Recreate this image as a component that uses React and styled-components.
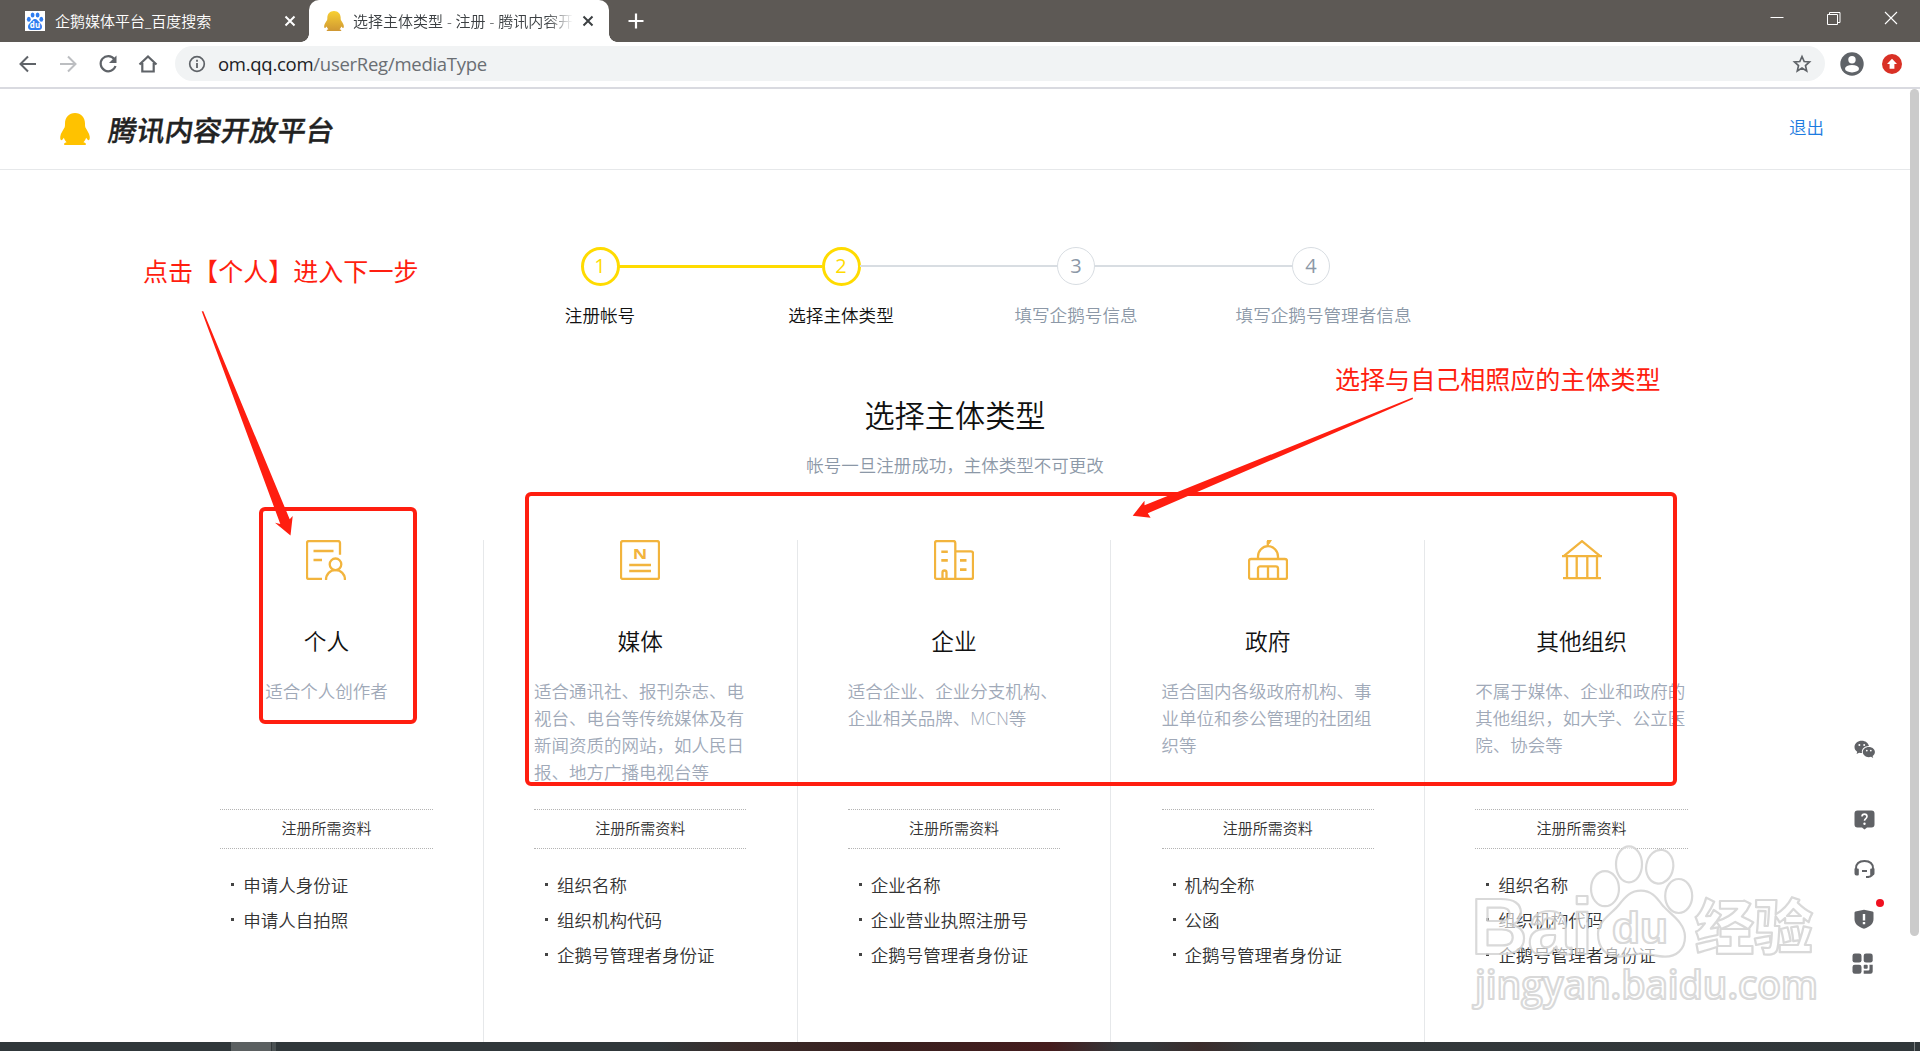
import React from 'react';
import styled, { createGlobalStyle, css } from 'styled-components';

const GOLD = '#f2b43d';
const YELLOW = '#ffdb00';
const RED = '#ff1e10';

const Global = createGlobalStyle`
  * { box-sizing: border-box; }
  body {
    margin: 0;
    background: #fff;
    font-family: "Open Sans", "Noto Sans CJK SC", sans-serif;
    font-weight: 350;
    overflow: hidden;
  }
  svg { display: block; flex: none; }
`;

const Screen = styled.div`
  position: relative;
  width: 1920px;
  height: 1051px;
  display: flex;
  flex-direction: column;
  overflow: hidden;
  background: #fff;
`;

/* ---------- browser chrome ---------- */
const TabStrip = styled.div`
  height: 42px;
  flex: none;
  display: flex;
  align-items: stretch;
  background: #5d5955;
`;

const Tab = styled.div`
  position: relative;
  display: flex;
  align-items: center;
  width: ${p => p.$width}px;
  padding: 0 0 0 ${p => p.$pad}px;
  font-size: 15px;
  color: ${p => (p.$active ? '#3c4043' : '#fff')};
  ${p => p.$active && css`
    background: #fff;
    border-radius: 10px 10px 0 0;
    &::before, &::after {
      content: "";
      position: absolute;
      bottom: 0;
      width: 8px;
      height: 8px;
    }
    &::before {
      left: -8px;
      background: radial-gradient(circle at 0 0, transparent 7.5px, #fff 8px);
    }
    &::after {
      right: -8px;
      background: radial-gradient(circle at 100% 0, transparent 7.5px, #fff 8px);
    }
  `}
`;

const TabTitle = styled.span`
  width: ${p => p.$width}px;
  margin-left: ${p => p.$gap}px;
  line-height: 20px;
  white-space: nowrap;
  overflow: hidden;
  ${p => p.$fade && css`
    mask-image: linear-gradient(90deg, #000 88%, transparent 100%);
  `}
`;

const TabClose = styled.div`
  margin-left: ${p => p.$gap || 0}px;
`;

const NewTab = styled.div`
  display: flex;
  align-items: center;
  padding-left: 19px;
`;

const WindowButtons = styled.div`
  display: flex;
  gap: 43px;
  margin-left: auto;
  padding: 11px 22px 0 0;
`;

const Toolbar = styled.div`
  height: 47px;
  flex: none;
  display: flex;
  align-items: center;
  padding: 0 17px 2px 16px;
  border-bottom: 2px solid #d9dae0;
`;

const NavButtons = styled.div`
  display: flex;
  gap: 16px;
  width: 159px;
`;

const Omnibox = styled.div`
  flex: none;
  width: 1650px;
  height: 35px;
  border-radius: 18px;
  background: #f1f3f4;
  display: flex;
  align-items: center;
  padding: 0 12px 0 13px;
`;

const Url = styled.span`
  flex: 1;
  margin-left: 12px;
  font-size: 18.5px;
  font-weight: 400;
  line-height: 26px;
  letter-spacing: -0.27px;
  color: #6a6e73;
  b { font-weight: 400; color: #202124; }
`;

const ToolbarIcons = styled.div`
  display: flex;
  align-items: center;
  gap: 17px;
  margin-left: 14px;
`;

/* ---------- page ---------- */
const Page = styled.div`
  flex: 1;
  min-height: 0;
  display: flex;
`;

const Content = styled.main`
  flex: 1;
  display: flex;
  flex-direction: column;
`;

const ScrollTrack = styled.div`
  width: 10px;
  flex: none;
`;

const ScrollThumb = styled.div`
  width: 9px;
  height: 847px;
  border-radius: 5px;
  background: #cbcbcb;
`;

const Header = styled.header`
  height: 81px;
  flex: none;
  display: flex;
  align-items: center;
  padding: 0 86px 1px 60px;
  border-bottom: 1px solid #e6e8ea;
`;

const BrandName = styled.span`
  margin: 2px 0 0 19px;
  font-size: 28.2px;
  line-height: 36px;
  font-weight: 500;
  -webkit-text-stroke: 0.35px #222;
  color: #222;
  transform: skewX(-9deg);
`;

const Logout = styled.a`
  margin: -4px 0 0 auto;
  font-size: 17.5px;
  line-height: 26px;
  color: #1c7be0;
`;

const Steps = styled.div`
  display: flex;
  justify-content: center;
  margin-top: 77px;
  padding-left: 1px;
`;

const Step = styled.div`
  width: 38px;
  display: flex;
  flex-direction: column;
  align-items: center;
  gap: 16px;
`;

const StepCircle = styled.div`
  width: ${p => (p.$on ? 39 : 38)}px;
  height: ${p => (p.$on ? 39 : 38)}px;
  flex: none;
  border-radius: 50%;
  border: ${p => (p.$on ? `3px solid ${YELLOW}` : '1px solid #d8dde2')};
  display: flex;
  align-items: center;
  justify-content: center;
  font-size: 20px;
  font-weight: 400;
  line-height: 30px;
  padding-bottom: 1px;
  color: ${p => (p.$on ? YELLOW : '#8c98a7')};
`;

const StepLabel = styled.span`
  font-size: 17.6px;
  line-height: 26px;
  white-space: nowrap;
  color: ${p => (p.$on ? '#111' : '#8c98a7')};
  margin-top: ${p => (p.$on ? 0 : 1)}px;
  margin-left: ${p => p.$shift || 0}px;
`;

const StepLine = styled.div`
  width: ${p => p.$width}px;
  height: ${p => (p.$on ? 3 : 2)}px;
  margin-top: 18px;
  background: ${p => (p.$on ? YELLOW : '#d8dde2')};
`;

const Title = styled.h1`
  margin: 66px 0 0;
  font-size: 30.2px;
  line-height: 44px;
  font-weight: 350;
  text-align: center;
  color: #111;
`;

const Subtitle = styled.p`
  margin: 14px 0 0;
  font-size: 17.5px;
  line-height: 26px;
  text-align: center;
  color: #8c98a7;
`;

const Columns = styled.div`
  flex: 1;
  display: flex;
  margin: 62px 171px 0 170px;
`;

const Column = styled.section`
  flex: 1;
  display: flex;
  flex-direction: column;
  align-items: center;
  border-right: 1px solid #e6e8ea;
  &:last-child { border-right-color: transparent; }
`;

const ColumnTitle = styled.h2`
  margin: 45px 0 0;
  font-size: 22.7px;
  line-height: 34px;
  font-weight: 350;
  color: #111;
`;

const Description = styled.div`
  width: 212.5px;
  height: 131px;
  margin-top: 19px;
  font-size: 17.5px;
  line-height: 27px;
  color: #a0a9b8;
  display: flex;
  justify-content: ${p => (p.$center ? 'center' : 'flex-start')};
`;

const Lines = styled.div`
  display: flex;
  flex-direction: column;
  white-space: nowrap;
`;

const Required = styled.div`
  width: 212.5px;
  height: 40px;
  border: 0 dotted #b4b4b4;
  border-width: 1px 0;
  font-size: 15px;
  line-height: 37px;
  text-align: center;
  color: #333;
`;

const Items = styled.ul`
  width: 212.5px;
  margin: 18px 0 0;
  padding: 0;
  list-style: none;
`;

const Item = styled.li`
  display: flex;
  align-items: center;
  height: 35.2px;
  padding-left: 11px;
  font-size: 17.5px;
  white-space: nowrap;
  color: #333;
  &::before {
    content: "";
    width: 3px;
    height: 3px;
    margin-right: 9px;
    background: #444;
  }
`;

/* ---------- floating tools ---------- */
const FloatingTools = styled.aside`
  position: absolute;
  left: 1852px;
  top: 740px;
  width: 26px;
  display: flex;
  flex-direction: column;
  align-items: flex-start;
`;

const Tool = styled.div`
  position: relative;
  height: ${p => p.$height}px;
  padding-left: ${p => (p.$flush ? 0 : 2)}px;
`;

const Badge = styled.span`
  position: absolute;
  left: 24px;
  top: -10px;
  width: 8px;
  height: 8px;
  border-radius: 50%;
  background: #f01020;
`;

/* ---------- overlays ---------- */
const Overlay = styled.svg`
  position: absolute;
  left: 0;
  top: 0;
  pointer-events: none;
`;

const Frame = styled.div`
  position: absolute;
  left: ${p => p.$x}px;
  top: ${p => p.$y}px;
  width: ${p => p.$w}px;
  height: ${p => p.$h}px;
  border: 4px solid ${RED};
  border-radius: 6px;
`;

const Note = styled.div`
  position: absolute;
  left: ${p => p.$x}px;
  top: ${p => p.$y}px;
  font-size: 25.05px;
  font-weight: 400;
  line-height: 36px;
  white-space: nowrap;
  color: ${RED};
`;

const Taskbar = styled.footer`
  height: 9px;
  flex: none;
  display: flex;
  background: linear-gradient(90deg, #30373a 0, #30373a 660px, #3a2b29 740px, #38201f 880px, #451c1d 1050px, #33373a 1120px, #33373a 1150px, #3b2c2b 1200px, #33383a 1260px, #30373a 100%);
`;

const TaskbarApp = styled.div`
  margin-left: 231px;
  width: 45px;
  background: linear-gradient(90deg, #5b6061 0 40px, #33393b 40px 41px, #4a5153 41px);
`;

const ShowDesktop = styled.div`
  margin-left: auto;
  width: 6px;
  border-left: 1px solid #7d8284;
`;

const Glyph = ({ w = 24, h = w, vb = `0 0 ${w} ${h}`, children, ...rest }) => (
  <svg width={w} height={h} viewBox={vb} fill="none" {...rest}>{children}</svg>
);

const BaiduIcon = () => (
  <Glyph w={20}>
    <rect width="20" height="20" fill="#fff" />
    <g fill="#2f7df0">
      <ellipse cx="3.8" cy="8.2" rx="1.9" ry="2.5" />
      <ellipse cx="7.6" cy="4" rx="1.9" ry="2.6" />
      <ellipse cx="12.6" cy="4" rx="1.9" ry="2.6" />
      <ellipse cx="16.3" cy="8.2" rx="1.9" ry="2.5" />
      <path d="M10 8c2 0 3 2 4.500 3.600C16 13 17 14 17 16c0 2-1.500 3-3 3H6c-1.500 0-3-1-3-3 0-2 1-3 2.500-4.400C7 10 8 8 10 8z" />
    </g>
    <text x="10" y="17.300" textAnchor="middle" fontSize="8" fontWeight="700" fontFamily="Open Sans, sans-serif" fill="#fff">du</text>
  </Glyph>
);

const PENGUIN = 'M15 0C9 0 5 4.600 5 10.500c0 1.400 0 2.600-.3 3.800C3.400 17 .6 20.200.3 23.600c-.2 2 .1 3.600.9 3.600.8 0 2-1.500 2.700-2.500.5 1.800 1.500 3.300 2.700 4.500-1.400.4-2.600 1-2.600 2 0 .5.300.8.900.8H25c.7 0 1-.3 1-.8 0-1-1.200-1.600-2.600-2 1.200-1.200 2.200-2.700 2.700-4.500.7 1 1.900 2.500 2.700 2.500.8 0 1.100-1.600.9-3.600-.3-3.400-3.100-6.600-4.400-9.300-.3-1.200-.3-2.400-.3-3.800C25 4.600 21 0 15 0z';

const Penguin = ({ w, h, shaded }) => (
  <Glyph w={w} h={h} vb="0 0 30 32" preserveAspectRatio="none">
    <defs>
      <linearGradient id="bird" x1="0" y1="0" x2="0" y2="1">
        <stop offset="0" stopColor="#f8d033" />
        <stop offset="1" stopColor="#cf9733" />
      </linearGradient>
    </defs>
    <path d={PENGUIN} fill={shaded ? 'url(#bird)' : '#ffc200'} />
  </Glyph>
);

const CloseMark = ({ color }) => (
  <Glyph w={12}><path d="M1.500 1.500l9 9M10.500 1.500l-9 9" stroke={color} strokeWidth="2" /></Glyph>
);

const typeIcons = {
  person: (
    <>
      <path d="M34 14.700V3a2 2 0 0 0-2-2H3a2 2 0 0 0-2 2v34a2 2 0 0 0 2 2h13M7.500 11h20M7.500 20H16" />
      <circle cx="29.500" cy="24.300" r="5.800" />
      <path d="M20 40c0-6 4-9.800 9.500-9.800S39 34 39 40" />
    </>
  ),
  media: (
    <>
      <rect x="1" y="1" width="38" height="38" rx="2" />
      <path d="M9.200 25h21.800M9.200 31h21.800" />
      <text x="12.800" y="19" fontSize="14" textLength="14.500" lengthAdjust="spacingAndGlyphs" fontWeight="700" fontFamily="Open Sans, sans-serif" fill={GOLD} stroke="none">N</text>
    </>
  ),
  company: (
    <>
      <path d="M1 37V3a2 2 0 0 1 2-2h16.300a2 2 0 0 1 2 2v36H3a2 2 0 0 1-2-2zM21.300 11.300H37a2 2 0 0 1 2 2V37a2 2 0 0 1-2 2H21.300M8.500 39v-6.500a2 2 0 0 1 4 0V39" />
      <path d="M7.300 11.700h6.500M7.300 20.400h6.500M26 20.400h6.500M26 29.600h6.500" strokeWidth="2.600" />
    </>
  ),
  government: (
    <>
      <rect x="1" y="19" width="38" height="20" rx="2" />
      <path d="M10 19v-2.500a10 10.300 0 0 1 20 0V19M10 39V28.500a2.200 2.200 0 0 1 2.200-2.200h15.600a2.200 2.200 0 0 1 2.200 2.200V39M20 26.300V39M19.800 6V1" />
      <path d="M19 0h5l-2.500 4H19z" fill={GOLD} stroke="none" />
    </>
  ),
  other: (
    <path d="M1.500 16.300L20 1.200l18.500 15.100M0 16.200h40M5 16v22M14.700 16v22M25.300 16v22M35 16v22M1 38.200h38" />
  ),
};

const types = [
  { icon: 'person', name: '个人', center: true, lines: ['适合个人创作者'], items: ['申请人身份证', '申请人自拍照'] },
  { icon: 'media', name: '媒体', lines: ['适合通讯社、报刊杂志、电', '视台、电台等传统媒体及有', '新闻资质的网站，如人民日', '报、地方广播电视台等'], items: ['组织名称', '组织机构代码', '企鹅号管理者身份证'] },
  { icon: 'company', name: '企业', lines: ['适合企业、企业分支机构、', '企业相关品牌、MCN等'], items: ['企业名称', '企业营业执照注册号', '企鹅号管理者身份证'] },
  { icon: 'government', name: '政府', lines: ['适合国内各级政府机构、事', '业单位和参公管理的社团组', '织等'], items: ['机构全称', '公函', '企鹅号管理者身份证'] },
  { icon: 'other', name: '其他组织', lines: ['不属于媒体、企业和政府的', '其他组织，如大学、公立医', '院、协会等'], items: ['组织名称', '组织机构代码', '企鹅号管理者身份证'] },
];

const steps = [
  { label: '注册帐号', on: true },
  { label: '选择主体类型', on: true, line: 203 },
  { label: '填写企鹅号信息', line: 197 },
  { label: '填写企鹅号管理者信息', line: 197, shift: 25 },
];

const Watermark = () => (
  <Overlay width="1920" height="1051" viewBox="0 0 1920 1051">
    <g fill="#fff" fillOpacity="0.6" stroke="#cfcfcf" strokeOpacity="0.8" strokeWidth="2.200" strokeLinejoin="round">
      <text x="1471" y="954" fontSize="80" fontWeight="700" textLength="122" lengthAdjust="spacingAndGlyphs" fontFamily="Liberation Sans, sans-serif">Bai</text>
      <ellipse cx="1605" cy="888.700" rx="14" ry="17.500" />
      <ellipse cx="1629" cy="864.300" rx="13" ry="18" />
      <ellipse cx="1659.700" cy="866.700" rx="13.500" ry="17" transform="rotate(10 1659.700 866.700)" />
      <ellipse cx="1678.700" cy="896" rx="13.500" ry="17" />
      <path d="M1641 890.700c10 0 15 6 21 14 6 8 23 17 23 32 0 13-9 20-20 20-9 0-15-3-24-3s-14 3-22 3c-13 0-21-9-21-23 0-13 14-20 21-29 7-9 12-14 22-14z" />
      <text x="1612" y="943" fontSize="45" fontWeight="700" textLength="56" lengthAdjust="spacingAndGlyphs" fontFamily="Liberation Sans, sans-serif">du</text>
      <text x="1695" y="949" fontSize="59" fontWeight="900" fontFamily="Noto Sans CJK SC, sans-serif">经验</text>
      <text x="1475" y="999" fontSize="39" textLength="343" lengthAdjust="spacingAndGlyphs" fontFamily="Open Sans, sans-serif" fontWeight="600">jingyan.baidu.com</text>
    </g>
  </Overlay>
);

export default function App() {
  return (
    <Screen>
      <Global />
      <TabStrip>
        <Tab $width={309} $pad={25}>
          <BaiduIcon />
          <TabTitle $width={229} $gap={10}>企鹅媒体平台_百度搜索</TabTitle>
          <TabClose><CloseMark color="#fff" /></TabClose>
        </Tab>
        <Tab $active $width={300} $pad={15}>
          <Penguin w={20} h={20} shaded />
          <TabTitle $width={220} $gap={9} $fade>选择主体类型 - 注册 - 腾讯内容开放平台</TabTitle>
          <TabClose $gap={9}><CloseMark color="#3c4043" /></TabClose>
        </Tab>
        <NewTab><Glyph w={16}><path d="M8 .5v15M.5 8h15" stroke="#fff" strokeWidth="2.200" /></Glyph></NewTab>
        <WindowButtons>
          <Glyph w={14}><path d="M.5 6.500h13" stroke="#fff" /></Glyph>
          <Glyph w={14}><path d="M.5 3.500h10v10H.5zM2.500 3.500v-2h10.500v10h-2.500" stroke="#fff" /></Glyph>
          <Glyph w={14}><path d="M1 1l12 12M13 1L1 13" stroke="#fff" strokeWidth="1.100" /></Glyph>
        </WindowButtons>
      </TabStrip>

      <Toolbar>
        <NavButtons>
          <Glyph w={24}><path d="M20 12H5M12 4.500L4.500 12l7.500 7.500" stroke="#5f6368" strokeWidth="2" /></Glyph>
          <Glyph w={24}><path d="M4 12h15M12 4.500l7.500 7.500-7.500 7.500" stroke="#bcbec1" strokeWidth="2" /></Glyph>
          <Glyph w={24}>
            <path d="M18.300 7A7.600 7.600 0 1 0 19.500 14" stroke="#5f6368" strokeWidth="2.200" />
            <path d="M20.500 3.500v7.500H13z" fill="#5f6368" />
          </Glyph>
          <Glyph w={24}><path d="M3.500 12.500L12 4.500l8.500 8M6.300 11v8.500h11.400V11" stroke="#5f6368" strokeWidth="2.200" /></Glyph>
        </NavButtons>
        <Omnibox>
          <Glyph w={18}>
            <circle cx="9" cy="9" r="7.300" stroke="#5f6368" strokeWidth="1.700" />
            <path d="M9 8v5M9 4.800v1.900" stroke="#5f6368" strokeWidth="1.800" />
          </Glyph>
          <Url><b>om.qq.com</b>/userReg/mediaType</Url>
          <Glyph w={22}><path d="M11 3.500l2.200 5 5.300.5-4 3.600 1.200 5.300L11 15.100l-4.700 2.800 1.200-5.300-4-3.600 5.300-.5z" stroke="#5f6368" strokeWidth="1.700" /></Glyph>
        </Omnibox>
        <ToolbarIcons>
          <Glyph w={26}>
            <circle cx="13" cy="13" r="11.700" fill="#5f6368" />
            <circle cx="13" cy="8.700" r="3.700" fill="#fff" />
            <ellipse cx="13" cy="17.700" rx="7" ry="3.700" fill="#fff" />
          </Glyph>
          <Glyph w={20}>
            <circle cx="10" cy="10" r="10" fill="#d93025" />
            <path d="M10 4.800l5 5.200h-2.600v4.800H7.600V10H5z" fill="#fff" />
          </Glyph>
        </ToolbarIcons>
      </Toolbar>

      <Page>
        <Content>
          <Header>
            <Penguin w={30} h={32} />
            <BrandName>腾讯内容开放平台</BrandName>
            <Logout>退出</Logout>
          </Header>

          <Steps>
            {steps.map((s, i) => (
              <React.Fragment key={s.label}>
                {s.line && <StepLine $width={s.line} $on={s.on} />}
                <Step>
                  <StepCircle $on={s.on}>{i + 1}</StepCircle>
                  <StepLabel $on={s.on} $shift={s.shift}>{s.label}</StepLabel>
                </Step>
              </React.Fragment>
            ))}
          </Steps>

          <Title>选择主体类型</Title>
          <Subtitle>帐号一旦注册成功，主体类型不可更改</Subtitle>

          <Columns>
            {types.map(t => (
              <Column key={t.name}>
                <Glyph w={40} stroke={GOLD} strokeWidth="2.300">{typeIcons[t.icon]}</Glyph>
                <ColumnTitle>{t.name}</ColumnTitle>
                <Description $center={t.center}>
                  <Lines>{t.lines.map(l => <span key={l}>{l}</span>)}</Lines>
                </Description>
                <Required>注册所需资料</Required>
                <Items>{t.items.map(x => <Item key={x}>{x}</Item>)}</Items>
              </Column>
            ))}
          </Columns>
        </Content>
        <ScrollTrack><ScrollThumb /></ScrollTrack>
      </Page>

      <Taskbar>
        <TaskbarApp />
        <ShowDesktop />
      </Taskbar>

      <FloatingTools>
        <Tool $height={70}>
          <Glyph w={22} h={19}>
            <path d="M7.800.8C3.800.8.500 3.500.500 7c0 2 1 3.600 2.700 4.800L2.600 14l2.500-1.300c.9.300 1.800.4 2.900.4C7.200 9 10.500 6 15 6.100 14.300 3 11.300.8 7.800.8z" fill="#606266" />
            <path d="M14.800 7c-3.400 0-6 2.300-6 5.100s2.600 5.100 6 5.100c.8 0 1.500-.1 2.200-.4l2.200 1.300-.6-2c1.400-1 2.300-2.400 2.300-4 0-2.800-2.700-5.100-6.100-5.100z" fill="#606266" />
            <g fill="#fff"><circle cx="5.400" cy="5" r="1" /><circle cx="10.200" cy="5" r="1" /><circle cx="12.800" cy="10.600" r=".9" /><circle cx="16.800" cy="10.600" r=".9" /></g>
          </Glyph>
        </Tool>
        <Tool $height={49}>
          <Glyph w={21} h={20}>
            <path d="M3.500.5h14a3 3 0 0 1 3 3v11a3 3 0 0 1-3 3h-4.500L10.500 19.500 8 17.500H3.500a3 3 0 0 1-3-3v-11a3 3 0 0 1 3-3z" fill="#606266" />
            <path d="M8 6.600c0-3.300 5-3.300 5 0 0 2-2.500 2-2.500 4.200" stroke="#fff" strokeWidth="1.600" />
            <circle cx="10.500" cy="13.700" r="1.200" fill="#fff" />
          </Glyph>
        </Tool>
        <Tool $height={50}>
          <Glyph w={21} h={20}>
            <path d="M2 11V9.500C2 4.500 5 2 10.500 2S19 4.500 19 9.500V13c0 3-2 4.800-5.500 5" stroke="#606266" strokeWidth="2" />
            <path d="M.5 9.500h3.300a1 1 0 0 1 1 1v5a1 1 0 0 1-1 1H2.500a2 2 0 0 1-2-2zM20.500 9.500h-3.300a1 1 0 0 0-1 1v5a1 1 0 0 0 1 1h1.300a2 2 0 0 0 2-2z" fill="#606266" />
            <path d="M8 12h5M12 18h3" stroke="#606266" strokeWidth="2" />
          </Glyph>
        </Tool>
        <Tool $height={44}>
          <Glyph w={20} h={20}>
            <path d="M10 .8l8.500 1.800c.6.100 1 .6 1 1.200V10c0 5-3.500 7.800-9.500 9.700C4 17.800.5 15 .5 10V3.800c0-.6.400-1.100 1-1.200z" fill="#606266" />
            <path d="M10 5v6.500M10 13v2.200" stroke="#fff" strokeWidth="2.400" />
          </Glyph>
          <Badge />
        </Tool>
        <Tool $height={22} $flush>
          <Glyph w={21} h={21}>
            <g fill="#606266">
              <rect x=".5" y=".5" width="9" height="9" rx="2.300" />
              <rect x="11.700" y=".5" width="9" height="9" rx="2.300" />
              <rect x=".5" y="11.700" width="9" height="9" rx="2.300" />
              <rect x="11.700" y="11.700" width="4" height="4" rx="1" />
              <path d="M17.500 11.700h3.200v6.700a2.300 2.300 0 0 1-2.300 2.300h-6.700v-3.200h4.500a1.300 1.300 0 0 0 1.300-1.300z" />
            </g>
          </Glyph>
        </Tool>
      </FloatingTools>

      <Frame $x={259} $y={507} $w={158} $h={217} />
      <Frame $x={525} $y={492} $w={1152} $h={294} />
      <Note $x={143} $y={253}>点击【个人】进入下一步</Note>
      <Note $x={1335} $y={361}>选择与自己相照应的主体类型</Note>
      <Overlay width="1920" height="1051" viewBox="0 0 1920 1051">
        <g fill={RED}>
          <path d="M201.700 311.300h1.600L289.700 519.300l3-3.300-2.200 19.500L275 522.700l5.300 1.300z" />
          <path d="M1412.600 397.600l.4 1.400L1147.800 513.300l2.800 4.400-17.900-2 11.800-15v4.600z" />
        </g>
      </Overlay>
      <Watermark />
    </Screen>
  );
}
